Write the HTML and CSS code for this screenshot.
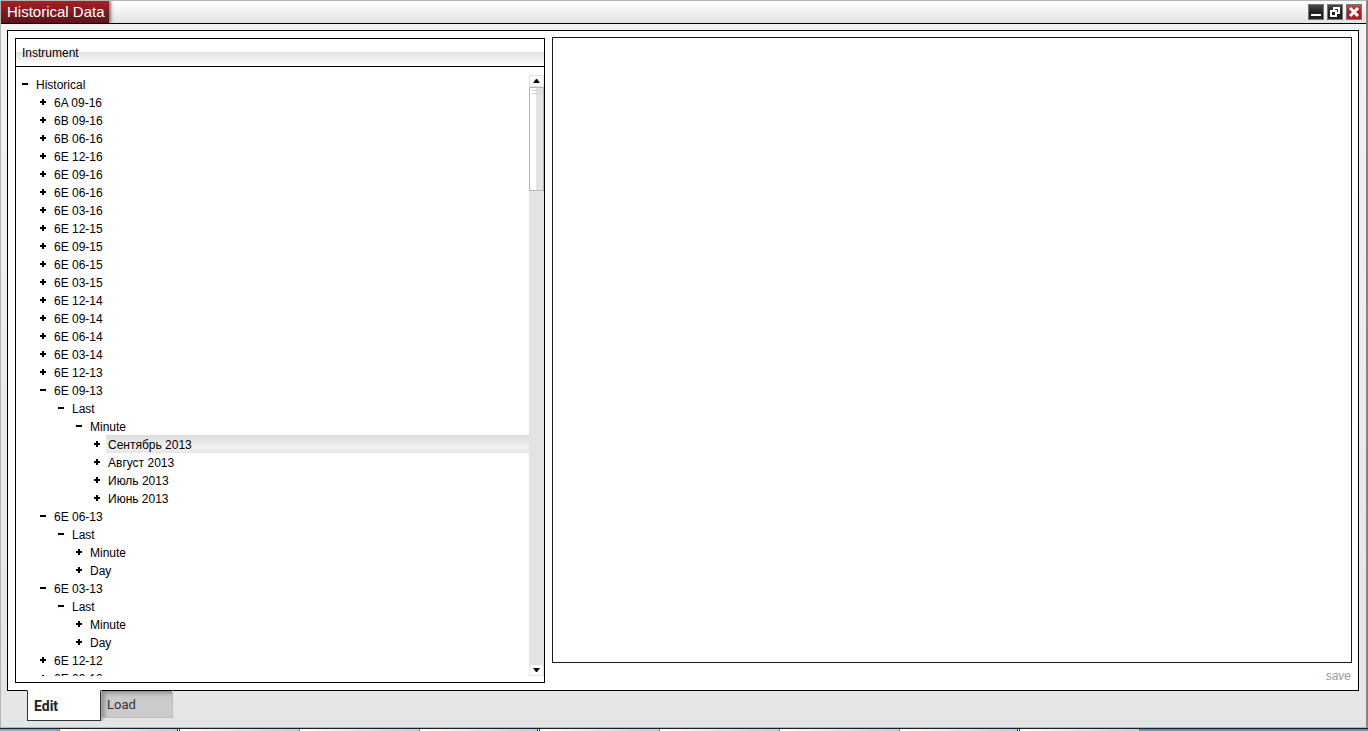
FILE: index.html
```html
<!DOCTYPE html>
<html lang="en">
<head>
  <meta charset="UTF-8" />
  <meta name="viewport" content="width=device-width, initial-scale=1" />
  <title>Historical Data</title>
  <link rel="stylesheet" href="styles.css">
</head>
<body>
  <div class="window">
    <header class="titlebar">
      <h1>Historical Data</h1>
      <div class="controls">
        <button class="ctl" aria-label="Minimize"><svg width="14" height="14"><path d="M2 9h10v2H2z" fill="#fff"/></svg></button>
        <button class="ctl" aria-label="Restore"><svg width="14" height="14" fill="none" stroke="#fff" stroke-width="2"><path d="M3 6h5v5H3z"/><path d="M6 6V3h5v5H8"/></svg></button>
        <button class="ctl close" aria-label="Close"><svg width="14" height="14" stroke="#fff" stroke-width="3"><path d="M3 3l8 8M11 3l-8 8"/></svg></button>
      </div>
    </header>

    <main class="content">
      <div class="panel">
        <section class="instruments">
          <h2>Instrument</h2>
          <div class="tree-area">
            <ul class="tree">
              <li><button class="node open">Historical</button>
                <ul>
                  <li><button class="node">6A 09-16</button></li>
                  <li><button class="node">6B 09-16</button></li>
                  <li><button class="node">6B 06-16</button></li>
                  <li><button class="node">6E 12-16</button></li>
                  <li><button class="node">6E 09-16</button></li>
                  <li><button class="node">6E 06-16</button></li>
                  <li><button class="node">6E 03-16</button></li>
                  <li><button class="node">6E 12-15</button></li>
                  <li><button class="node">6E 09-15</button></li>
                  <li><button class="node">6E 06-15</button></li>
                  <li><button class="node">6E 03-15</button></li>
                  <li><button class="node">6E 12-14</button></li>
                  <li><button class="node">6E 09-14</button></li>
                  <li><button class="node">6E 06-14</button></li>
                  <li><button class="node">6E 03-14</button></li>
                  <li><button class="node">6E 12-13</button></li>
                  <li><button class="node open">6E 09-13</button>
                    <ul>
                      <li><button class="node open">Last</button>
                        <ul>
                          <li><button class="node open">Minute</button>
                            <ul>
                              <li><button class="node selected">Сентябрь 2013</button></li>
                              <li><button class="node">Август 2013</button></li>
                              <li><button class="node">Июль 2013</button></li>
                              <li><button class="node">Июнь 2013</button></li>
                            </ul>
                          </li>
                        </ul>
                      </li>
                    </ul>
                  </li>
                  <li><button class="node open">6E 06-13</button>
                    <ul>
                      <li><button class="node open">Last</button>
                        <ul>
                          <li><button class="node">Minute</button></li>
                          <li><button class="node">Day</button></li>
                        </ul>
                      </li>
                    </ul>
                  </li>
                  <li><button class="node open">6E 03-13</button>
                    <ul>
                      <li><button class="node open">Last</button>
                        <ul>
                          <li><button class="node">Minute</button></li>
                          <li><button class="node">Day</button></li>
                        </ul>
                      </li>
                    </ul>
                  </li>
                  <li><button class="node">6E 12-12</button></li>
                  <li><button class="node">6E 09-12</button></li>
                </ul>
              </li>
            </ul>
            <div class="scrollbar">
              <button class="arrow" aria-label="Scroll up"><svg width="7" height="4"><path d="M0 4L3 0h1l3 4z"/></svg></button>
              <div class="track"><div class="thumb"></div></div>
              <button class="arrow" aria-label="Scroll down"><svg width="7" height="4"><path d="M0 0h7L4 4H3z"/></svg></button>
            </div>
          </div>
        </section>

        <section class="editor">
          <div class="data"></div>
          <button class="save">save</button>
        </section>
      </div>

      <nav class="tabs">
        <button class="tab active">Edit</button>
        <button class="tab">Load</button>
      </nav>
    </main>
  </div>

  <footer class="taskbar">
    <span class="start"></span>
    <span class="last"></span><span></span><span></span><span class="last"></span><span></span><span></span><span></span><span class="last"></span><span></span>
    <span class="rest"></span>
  </footer>
</body>
</html>
```
FILE: styles.css
```css
* {
  box-sizing: border-box;
}
body {
  margin: 0;
  height: 100vh;
  display: flex;
  flex-direction: column;
  background: #e4e5e7;
  font-family: "Liberation Sans", Arial, sans-serif;
  font-size: 12px;
  color: #000;
  overflow: hidden;
}
button {
  font: inherit;
  color: inherit;
  border: none;
  background: none;
  padding: 0;
  cursor: pointer;
}
ul {
  list-style: none;
  margin: 0;
  padding: 0;
}
.window {
  flex: 1;
  min-height: 0;
  display: flex;
  flex-direction: column;
  border: 1px solid #b4b4b4;
  border-right: 2px solid #8a8379;
}

/* title bar */
.titlebar {
  display: flex;
  justify-content: space-between;
  align-items: stretch;
  height: 23px;
  flex: none;
  background: linear-gradient(#fff, #e2e3e4);
  border-bottom: 1px solid #000;
}
.titlebar h1 {
  margin: 0;
  padding: 0 4px 0 6px;
  font-size: 15px;
  font-weight: normal;
  line-height: 22px;
  color: #fff;
  background: linear-gradient(#a51f25, #5c1418);
  box-shadow: 2px 0 3px #777;
  clip-path: inset(0 -6px 0 0);
}
.controls {
  display: flex;
  align-items: center;
  gap: 3px;
  padding-right: 4px;
}
.ctl {
  width: 16px;
  height: 16px;
  border: 1px solid #777;
  background: linear-gradient(#4a4849, #231f20 50%);
}
.ctl svg {
  display: block;
}
.ctl.close {
  background: linear-gradient(#c4494d, #a51f25 50%);
}

/* main area */
.content {
  flex: 1;
  min-height: 0;
  display: flex;
  flex-direction: column;
  padding: 6px 7px 6px 6px;
  background: linear-gradient(#f3f3f4, #e4e5e7);
}
.panel {
  flex: 1;
  min-height: 0;
  display: grid;
  grid-template-columns: 53fr 80fr;
  grid-template-rows: minmax(0, 1fr);
  gap: 7px;
  padding: 6px 6px 7px 7px;
  border: 1px solid #000;
  background: #fff;
}
.instruments {
  min-width: 0;
  display: flex;
  flex-direction: column;
  margin-top: 1px;
  border: 1px solid #000;
}
.instruments h2 {
  margin: 0;
  height: 28px;
  flex: none;
  padding-left: 6px;
  font-size: 12px;
  font-weight: normal;
  line-height: 28px;
  border-bottom: 1px solid #000;
  background: linear-gradient(#fff 50%, #e3e3e3 50%, #fff);
}
.tree-area {
  flex: 1;
  min-height: 0;
  display: flex;
  margin: 8px 0 6px;
}
.tree {
  flex: 1;
  overflow: hidden;
  padding-left: 4px;
}
.tree ul {
  padding-left: 18px;
}
.node {
  display: flex;
  align-items: center;
  width: 100%;
  height: 18px;
  padding: 2px 0 0 16px;
  line-height: 16px;
  text-align: left;
  background:
    linear-gradient(#000, #000) 2px 8px / 6px 2px no-repeat,
    linear-gradient(#000, #000) 4px 6px / 2px 6px no-repeat;
}
.node.open {
  background: linear-gradient(#000, #000) 2px 8px / 6px 2px no-repeat;
}
.node.selected {
  background:
    linear-gradient(#000, #000) 2px 8px / 6px 2px no-repeat,
    linear-gradient(#000, #000) 4px 6px / 2px 6px no-repeat,
    linear-gradient(to right, #fff 14px, transparent 14px),
    linear-gradient(#dcdcdc, #f2f2f2 65%, #e6e6e6);
}

/* scrollbar */
.scrollbar {
  width: 15px;
  display: flex;
  flex-direction: column;
  background: #e3e3e3;
}
.arrow {
  display: flex;
  align-items: center;
  justify-content: center;
  height: 12px;
  flex: none;
  border: 1px solid #e3e3e3;
  background: #fff;
}
.track {
  flex: 1;
}
.thumb {
  height: 18%;
  border: 1px solid #b5b5b5;
  background:
    linear-gradient(#d0d0d0, #d0d0d0) 2px 2px / 9px 1px no-repeat,
    linear-gradient(#d0d0d0, #d0d0d0) 2px 5px / 9px 1px no-repeat,
    linear-gradient(to right, #fff 50%, #e3e3e3 50%);
}

/* editor */
.editor {
  min-width: 0;
  display: flex;
  flex-direction: column;
}
.data {
  flex: 1;
  border: 1px solid #1c1a1b;
}
.save {
  align-self: flex-end;
  height: 20px;
  padding: 6px 1px 0 0;
  line-height: 14px;
  font-style: italic;
  color: #999;
}

/* bottom tabs */
.tabs {
  display: flex;
  align-items: flex-start;
  padding-left: 20px;
  margin-top: -1px;
}
.tab {
  width: 72px;
  height: 28px;
  padding-left: 5px;
  font-family: Roboto, sans-serif;
  font-size: 13px;
  line-height: 28px;
  text-align: left;
  color: #333;
  background: #cbcbcb;
  border: 1px solid #bcbcbc;
  border-top: 1px solid #000;
  box-shadow: inset 4px 4px 5px -2px #888;
}
.tab.active {
  width: 74px;
  height: 31px;
  padding-left: 6px;
  font-size: 14px;
  font-weight: bold;
  color: #222;
  background: #fff;
  border: 1px solid #333;
  border-top: 1px solid #fff;
  box-shadow: 2px 2px 4px -1px #999;
  clip-path: inset(0 -6px 0 0);
}

/* desktop taskbar edge */
.taskbar {
  display: flex;
  flex: none;
  height: 3px;
  border-top: 1px solid #1b1f24;
  background: #7592b4;
}
.taskbar span {
  width: 120px;
  border-right: 1px solid #6f8398;
  background: linear-gradient(to right, #fff, #c3cfdb);
}
.taskbar .start {
  width: 60px;
  background: #8ba6c1;
}
.taskbar .last {
  border-right: 3px double #2b3f55;
}
.taskbar .rest {
  flex: 1;
  border: none;
  background: #6f8fb2;
}
```
